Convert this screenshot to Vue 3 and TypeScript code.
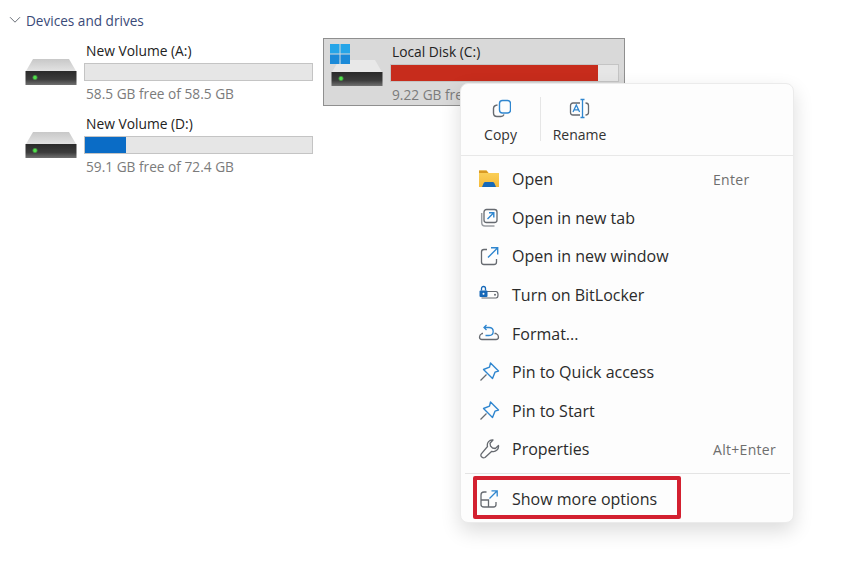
<script setup lang="ts">
interface Drive { name: string; free: string; pct: number; color: string }
const left: Drive[] = [
  { name: 'New Volume (A:)', free: '58.5 GB free of 58.5 GB', pct: 0, color: '#0a6cc6' },
  { name: 'New Volume (D:)', free: '59.1 GB free of 72.4 GB', pct: 18, color: '#0a6cc6' },
]
const items = [
  { key: 'open', label: 'Open', hint: 'Enter' },
  { key: 'tab', label: 'Open in new tab', hint: '' },
  { key: 'win', label: 'Open in new window', hint: '' },
  { key: 'lock', label: 'Turn on BitLocker', hint: '' },
  { key: 'format', label: 'Format...', hint: '' },
  { key: 'pin', label: 'Pin to Quick access', hint: '' },
  { key: 'pin', label: 'Pin to Start', hint: '' },
  { key: 'wrench', label: 'Properties', hint: 'Alt+Enter' },
]
</script>

<template>
  <div class="page">
    <svg width="0" height="0" class="defs">
      <defs>
        <linearGradient id="hb" x1="0" y1="0" x2="0" y2="1"><stop offset="0" stop-color="#2a2a2a"/><stop offset="0.6" stop-color="#3c3c3c"/><stop offset="1" stop-color="#707070"/></linearGradient>
        <linearGradient id="ht" x1="0" y1="0" x2="0" y2="1"><stop offset="0" stop-color="#c8c8c8"/><stop offset="1" stop-color="#e2e2e2"/></linearGradient>
        <linearGradient id="fo" x1="0" y1="0" x2="0" y2="1"><stop offset="0" stop-color="#fbd35c"/><stop offset="1" stop-color="#f5b93a"/></linearGradient>
        <radialGradient id="led"><stop offset="0.4" stop-color="#4fe04a"/><stop offset="1" stop-color="#4fe04a" stop-opacity="0"/></radialGradient>
      </defs>
    </svg>
    <div class="section">
      <svg class="chev" width="12" height="8" viewBox="0 0 12 8"><path d="M1 1.200 6 6.200 11 1.200" fill="none" stroke="#6a6f78" stroke-width="1"/></svg>
      <span>Devices and drives</span>
    </div>
    <div class="drives">
      <div class="col">
        <div v-for="d in left" :key="d.name" class="drive">
          <svg class="hdd" width="52" height="28" viewBox="0 0 52 28">
            <path d="M8 1H44L51 13H1Z" fill="url(#ht)"/>
            <rect x="0.500" y="13" width="51" height="14" fill="url(#hb)"/>
            <circle cx="10" cy="19.500" r="3" fill="url(#led)"/>
          </svg>
          <div class="info">
            <div class="name">{{ d.name }}</div>
            <div class="bar"><div class="fill" :style="{ width: d.pct + '%', background: d.color }"></div></div>
            <div class="free">{{ d.free }}</div>
          </div>
        </div>
      </div>
      <div class="drive selected">
        <svg class="hdd" width="52" height="28" viewBox="0 0 52 28">
          <path d="M8 1H44L51 13H1Z" fill="#e8e8e8"/>
          <rect x="0.500" y="13" width="51" height="14" fill="url(#hb)"/>
          <circle cx="10" cy="19.500" r="3" fill="url(#led)"/>
        </svg>
        <svg class="winlogo" width="20" height="20" viewBox="0 0 20 20">
          <rect width="9.500" height="9.500" fill="#25a5e8"/><rect x="10.500" width="9.500" height="9.500" fill="#25a5e8"/>
          <rect y="10.500" width="9.500" height="9.500" fill="#1b8ad8"/><rect x="10.500" y="10.500" width="9.500" height="9.500" fill="#1b8ad8"/>
        </svg>
        <div class="info">
          <div class="name">Local Disk (C:)</div>
          <div class="bar red"><div class="fill" style="width: 91%; background: #c72c1c"></div></div>
          <div class="free">9.22 GB free of 111 GB</div>
        </div>
      </div>
    </div>

    <div class="menu">
      <div class="top">
        <div class="tbtn">
          <svg width="20" height="22" viewBox="0 0 20 22" fill="none"><rect x="8.500" y="3.500" width="11" height="12.500" rx="3" stroke="#2f86cf" stroke-width="1.400"/><path d="M6.500 8C4 8.300 2.500 9.800 2.500 11.500v4.500c0 2 1.500 3.500 3.500 3.500h4c1.500 0 2.500-.8 3-2" stroke="#666a70" stroke-width="1.400"/></svg>
          <span>Copy</span>
        </div>
        <div class="tsep"></div>
        <div class="tbtn second">
          <svg width="22" height="22" viewBox="0 0 22 22" fill="none"><path d="M11 6H4C2.600 6 1.500 7 1.500 8.500v7C1.500 17 2.600 18 4 18h7M16.500 6c1.800 0 3 1 3 2.500v7c0 1.500-1.200 2.500-3 2.500" stroke="#666a70" stroke-width="1.300"/><path d="M11.500 2.500h4M13.500 2.500v18M11.500 20.500h4" stroke="#2f86cf" stroke-width="1.300"/><path d="M4 15 7.300 8 10.600 15M5.200 12.800h4.200" stroke="#2f86cf" stroke-width="1.300"/></svg>
          <span>Rename</span>
        </div>
      </div>
      <div class="list">
        <div v-for="it in items" :key="it.label" class="item">
          <span class="ic">
            <svg v-if="it.key === 'open'" width="22" height="20" viewBox="0 0 22 20"><path d="M1 1.500h7.500l2 2.500H21v14H1Z" fill="url(#fo)"/><path d="M1 1.500h7.500l2 2.500H1Z" fill="#d99a22"/><path d="M4 18 5.500 14.500c.4-1 1-1.500 2-1.500h7c1 0 1.600.5 2 1.500L18 18Z" fill="#1668b8"/></svg>
            <svg v-else-if="it.key === 'tab'" width="20" height="20" viewBox="0 0 20 20" fill="none"><rect x="5" y="1.500" width="13" height="13" rx="2.500" stroke="#666a70" stroke-width="1.300"/><path d="M2.700 5v9.500c0 2 1.300 3.500 3.300 3.500h9.500" stroke="#9a9da2" stroke-width="1.500"/><path d="M8.500 11 14.500 5M10 4.800H14.800V9.500" stroke="#2f86cf" stroke-width="1.400"/></svg>
            <svg v-else-if="it.key === 'win'" width="20" height="20" viewBox="0 0 20 20" fill="none"><path d="M8 3.500H5C3.300 3.500 2.500 4.500 2.500 6v10c0 1.500.8 2.500 2.500 2.500h10c1.500 0 2.500-1 2.500-2.500v-3" stroke="#666a70" stroke-width="1.300"/><path d="M9 11.500 18.500 2M12 1.800H18.700V8.500" stroke="#2f86cf" stroke-width="1.400"/></svg>
            <svg v-else-if="it.key === 'lock'" width="22" height="20" viewBox="0 0 22 20" fill="none"><path d="M9 6.500H18c2.700 0 2.700 6.500 0 6.500H3.500" stroke="#666a70" stroke-width="1.200"/><rect x="1.500" y="5.500" width="8" height="6.500" rx="1" fill="#1668b8"/><path d="M3.500 5.500V3.500C3.500.800 7.500.800 7.500 3.500V5.500" stroke="#1668b8" stroke-width="1.300"/><circle cx="5.500" cy="8.700" r="1" fill="#fff"/><circle cx="17" cy="9.700" r="1" fill="#666a70"/></svg>
            <svg v-else-if="it.key === 'format'" width="22" height="20" viewBox="0 0 22 20" fill="none"><path d="M5 9.500H4C2 10.500 1.500 11.500 1.500 13c0 1.500 1 2.500 2.500 2.500h14c1.500 0 2.500-1 2.500-2.500 0-1.500-.7-2.500-2.500-3.500h-1.500" stroke="#666a70" stroke-width="1.300"/><path d="M8.500 1 6 3.500 8.500 6M6.200 3.500H11c2.500 0 4.200 1.800 4.200 4s-1.700 4-4.200 4H7.500" stroke="#2f86cf" stroke-width="1.300"/></svg>
            <svg v-else-if="it.key === 'pin'" width="21" height="20" viewBox="0 0 21 20" fill="none"><path d="M11.500 1 19.500 9 16 10.200 13.500 16.500 4.500 7.500 10.500 5.200Z" stroke="#2f86cf" stroke-width="1.400" stroke-linejoin="round"/><path d="M7.500 12.500 1.500 18.500" stroke="#666a70" stroke-width="1.300"/></svg>
            <svg v-else-if="it.key === 'wrench'" width="21" height="20" viewBox="0 0 21 20" fill="none"><path d="M14 1 11 4.200 11.500 7 13.500 9 16.300 9.500 19.500 6.500C20 10.500 16.500 13.500 12.800 12.300L6 18.500C3.800 19.700.8 17.200 2.300 14.800L8.500 7.500C7.500 3.800 10.500.5 14 1Z" stroke="#666a70" stroke-width="1.300" stroke-linejoin="round"/></svg>
          </span>
          <span class="label">{{ it.label }}</span>
          <span class="hint">{{ it.hint }}</span>
        </div>
        <div class="sep"></div>
        <div class="more">
          <span class="ic">
            <svg width="20" height="20" viewBox="0 0 20 20" fill="none"><path d="M7.500 3H5C3.300 3 2 4 2 6v9.500C2 17 3.300 18 5 18h9.500c1.500 0 2.500-1 2.500-2.500V13M2 11h7.500v7" stroke="#666a70" stroke-width="1.300"/><path d="M10.500 9.500 18 2M12.500 1.800H18.200V7.500" stroke="#2f86cf" stroke-width="1.300"/></svg>
          </span>
          <span class="label">Show more options</span>
        </div>
      </div>
    </div>
  </div>
</template>

<style>
html, body { margin: 0; background: #fff; }
</style>

<style scoped>
.page {
  position: relative;
  width: 850px;
  height: 575px;
  overflow: hidden;
  background: #fff;
  padding: 11px 0 0 9px;
  box-sizing: border-box;
  font-family: "Open Sans", "Noto Sans", sans-serif;
  font-size: 14px;
  color: #2b2b2b;
}
.defs { position: absolute; }
.section {
  display: flex;
  align-items: center;
  gap: 5px;
  height: 18px;
  font-size: 13.600px;
  color: #3a4a78;
}
.drives {
  display: flex;
  gap: 9px;
  margin-top: 9px;
  margin-left: 14px;
}
.col { display: flex; flex-direction: column; gap: 5px; width: 291px; }
.drive {
  display: flex;
  gap: 7px;
  height: 68px;
  width: 291px;
  box-sizing: border-box;
  padding: 4px 0 0 2px;
  position: relative;
}
.hdd { margin-top: 16px; flex: none; }
.info { width: 229px; }
.name { font-size: 13.800px; line-height: 18px; color: #222; padding-left: 2px; }
.bar { height: 18px; background: #e6e6e6; border: 1px solid #c4c4c4; box-sizing: border-box; margin-top: 3px; }
.fill { height: 100%; }
.free { font-size: 13.700px; line-height: 18px; color: #7b7b7b; margin-top: 4px; padding-left: 2px; }
.selected {
  background: #d9d9d9;
  border: 1px solid #8f8f8f;
  width: 302px;
  padding-left: 7px;
}
.winlogo { position: absolute; left: 6px; top: 5px; }
.menu {
  position: absolute;
  left: 460px;
  top: 83px;
  width: 334px;
  height: 440px;
  background: #fdfdfd;
  border: 1px solid #ebebeb;
  border-radius: 8px;
  box-sizing: border-box;
  box-shadow: 0 8px 20px rgba(0, 0, 0, 0.14);
}
.top {
  display: flex;
  align-items: flex-start;
  height: 72px;
  border-bottom: 1px solid #e8e8e8;
  padding-top: 13px;
  box-sizing: border-box;
}
.tbtn {
  width: 79px;
  display: flex;
  flex-direction: column;
  align-items: center;
  gap: 6px;
  font-size: 14px;
  color: #333;
}
.second { width: 77px; }
.tsep { width: 1px; height: 44px; background: #e6e6e6; }
.list { padding-top: 4px; }
.item {
  display: flex;
  align-items: center;
  height: 38.600px;
  padding: 0 17px;
}
.ic { width: 22px; height: 20px; flex: none; display: flex; align-items: center; justify-content: center; margin-right: 12px; }
.label { font-size: 16px; color: #2b2b2b; flex: 1; white-space: nowrap; }
.hint { width: 63px; font-size: 14px; letter-spacing: 0.3px; color: #6e6e6e; white-space: nowrap; }
.sep { height: 1px; background: #e4e4e4; margin: 4px 3px 0 4px; }
.more {
  display: flex;
  align-items: center;
  width: 208px;
  height: 43px;
  margin: 2px 0 0 12px;
  box-sizing: border-box;
  padding: 3px 0 0 1px;
  border: 4px solid #d32030;
  border-radius: 2px;
}
.more .label { flex: none; }
</style>
